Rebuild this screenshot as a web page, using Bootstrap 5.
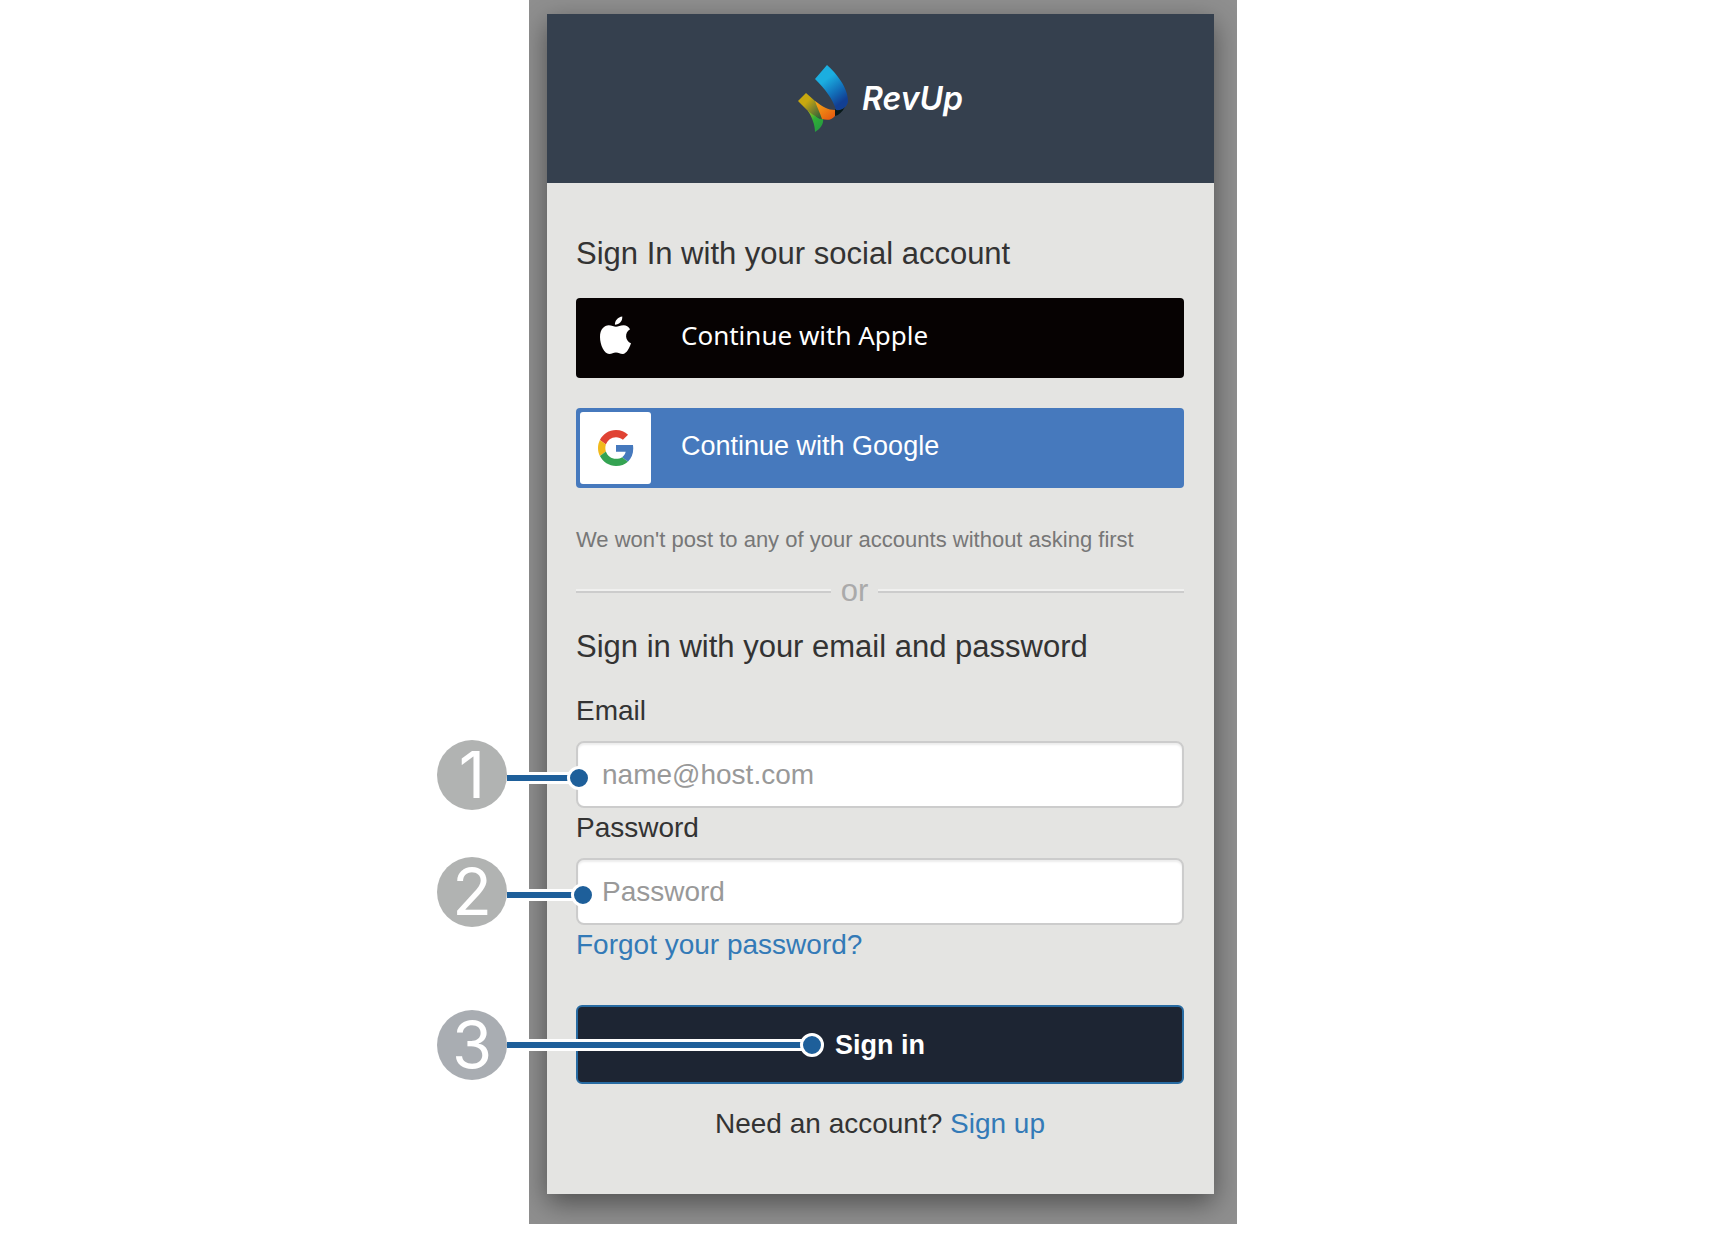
<!DOCTYPE html>
<html lang="en">
<head>
<meta charset="utf-8">
<meta name="viewport" content="width=device-width, initial-scale=1">
<title>RevUp sign in</title>
<link href="https://cdn.jsdelivr.net/npm/bootstrap@5.3.0/dist/css/bootstrap.min.css" rel="stylesheet">
<style>
body { font-family: "Liberation Sans", Arial, sans-serif; font-size: 28px; line-height: 40px; color: #333; background: #fff; }
.stage-row { padding-left: 45px; }
.stage { width: 100%; max-width: 708px; background: #8f8f8f; padding: 14px 23px 30px 18px; }
.dialog { position: relative; z-index: 0; background: #e4e4e2; }
/* soft dialog shadow, kept inside the backdrop */
.dialog::before { content: ""; position: absolute; inset: 0; z-index: -1; background: #e4e4e2; box-shadow: 0 9px 26px rgba(0,0,0,.45); clip-path: inset(-14px -23px -30px -18px); }
.brand-bar { background: #35404e; height: 169px; gap: 14px; }
.brand-name { font-family: Inter, sans-serif; font-weight: 600; font-style: italic; font-size: 32px; color: #fff; }
.dialog-main { padding: 51px 30px 50px 29px; }
.section-title { font-size: 31px; line-height: 40px; font-weight: 400; margin: 0; }
.social-btn { height: 80px; border: 0; border-radius: 4px; padding: 4px; color: #fff; font-size: 27px; gap: 30px; }
.social-btn .glyph { width: 71px; height: 72px; border-radius: 3px; }
.social-apple { background: #060202; font-family: "Noto Sans", sans-serif; font-size: 26px; margin-top: 24px; padding-bottom: 10px; }
.social-google { background: #4679bd; margin-top: 30px; }
.social-google .glyph { background: #fff; }
.social-google .caption-text { padding-bottom: 4px; }
.promise { font-size: 22px; line-height: 32px; color: #777; margin: 36px 0 0; white-space: nowrap; }
.divider { color: #aaa; font-size: 31px; line-height: 40px; gap: 10px; margin-top: 15px; }
.divider span { height: 4px; background: #ccc; border-top: 2px solid #f0f0ef; }
.divider .left-rule { flex: 255; }
.divider .right-rule { flex: 306; }
.field-box { height: 67px; font-size: 28px; border: 2px solid #ccc; border-radius: 8px; padding: 0 24px; box-shadow: inset 0 2px 2px rgba(0,0,0,.075); background: #fff; color: #333; }
.field-box::placeholder { color: #999; opacity: 1; }
.field-name { line-height: 40px; margin-bottom: 10px; }
.text-link { color: #337ab7; text-decoration: none; }
.signin-row { margin-top: 40px; }
.signin-btn { height: 79px; background: #1d2533; border: 2px solid #286ba2; border-radius: 6px; color: #fff; font-weight: 700; font-size: 27px; }
.signup-line { margin: 20px 0 0; }
/* numbered callouts laid over the form */
.callout { position: absolute; top: 50%; right: 100%; transform: translateY(-50%); pointer-events: none; z-index: 2; }
.callout .num { width: 70px; height: 70px; border-radius: 50%; background: #b1b3b2; color: #fff; font-family: Inter, sans-serif; font-weight: 400; font-size: 65px; line-height: 70px; text-align: center; flex: none; }
.callout .stem { height: 12px; background: #1e5f9a; border: solid #fff; border-width: 3px 0; flex: 1; margin-right: -4px; }
.callout .tip { width: 24px; height: 24px; border: 3px solid #fff; border-radius: 50%; background: #1e5f9a; flex: none; }
.low-stem { padding-top: 6px; }
.low-stem .num { margin-bottom: 6px; }
.to-email { width: 154px; margin-right: -15px; }
.to-password { width: 158px; margin-right: -19px; }
.to-signin { width: 387px; margin-right: -248px; }
.to-signin .num { background: #a9adb2; }
</style>
</head>
<body>
<div class="stage-row d-flex justify-content-center">
  <div class="stage">
    <main class="dialog">
      <header class="brand-bar d-flex align-items-center justify-content-center">
        <svg width="50" height="68" viewBox="0 0 50 68" aria-hidden="true">
          <defs>
            <linearGradient id="b" x1="0.2" y1="0.1" x2="0.7" y2="1"><stop offset=".25" stop-color="#1baee0"/><stop offset=".6" stop-color="#1272bb"/><stop offset=".9" stop-color="#123f93"/></linearGradient>
            <linearGradient id="o" x1="0" y1="0" x2="1" y2="1"><stop offset="0" stop-color="#f8b417"/><stop offset="1" stop-color="#e4530f"/></linearGradient>
            <linearGradient id="y" x1="0" y1="0" x2="1" y2="1"><stop offset=".35" stop-color="#c8a80f"/><stop offset=".65" stop-color="#77802c"/><stop offset="1" stop-color="#1f5c38"/></linearGradient>
            <linearGradient id="g" x1="0" y1="0" x2=".6" y2="1"><stop offset="0" stop-color="#b5c919"/><stop offset=".5" stop-color="#2fae36"/><stop offset="1" stop-color="#269b40"/></linearGradient>
          </defs>
          <path d="M37 44 C41 46 45 44 47 42 C44 47 41 50 37 51Z" fill="#081818"/>
          <path d="M29 0 L17 14 C27 24 35 34 38 45 C44 46 50 41 50 36 C50 23 39 9 29 0Z" fill="url(#b)"/>
          <path d="M17 36 C25 42 30 45 37 45 L37 51 C33 56 28 55 24 54 C18 51 11 44 13 39Z" fill="url(#o)"/>
          <path d="M10 44 C17 50 20 55 25 54 C26 59 22 64 17 67 C17 60 14 52 10 46Z" fill="url(#g)"/>
          <path d="M8 28 L0 36 L11 47 C15 50 21 53 24 54 C22 48 19 42 17 36Z" fill="url(#y)"/>
        </svg>
        <span class="brand-name">RevUp</span>
      </header>
      <div class="dialog-main">
        <h1 class="section-title">Sign In with your social account</h1>
        <button type="button" class="social-btn social-apple w-100 d-flex align-items-center">
          <span class="glyph d-flex align-items-center justify-content-center">
            <svg width="31" height="39" viewBox="0 0 32 39" fill="#fff" aria-hidden="true"><path d="M23 0c.4 4.500-3 8.500-7.600 8.500C15 4.500 18.500.6 23 0Z"/><path d="M31 13c-6 3.500-5 12 1 14.500-1.500 4.500-4.500 11-8.500 11-3 0-4-1.500-7-1.500s-4 1.500-7 1.500C4.500 38.500 0 29.500 0 21 0 13 4.500 9 9 9c3 0 5.500 1.500 7.500 1.500s4.500-1.500 8-1.500c2.500 0 5 1.500 6.500 4Z"/></svg>
          </span>
          <span class="caption-text">Continue with Apple</span>
        </button>
        <button type="button" class="social-btn social-google w-100 d-flex align-items-center">
          <span class="glyph d-flex align-items-center justify-content-center">
            <svg width="36" height="36" viewBox="0 0 48 48" aria-hidden="true"><path fill="#e04334" d="M24 9.500c3.540 0 6.710 1.220 9.210 3.600l6.850-6.850C35.900 2.380 30.470 0 24 0 14.620 0 6.510 5.380 2.560 13.220l7.980 6.190C12.430 13.720 17.740 9.500 24 9.500z"/><path fill="#4679bd" d="M46.980 24.550c0-1.570-.15-3.090-.38-4.550H24v9.020h12.940c-.58 2.960-2.260 5.480-4.780 7.180l7.730 6c4.510-4.180 7.090-10.360 7.090-17.650z"/><path fill="#f1b91b" d="M10.530 28.590c-.48-1.450-.76-2.990-.76-4.590s.27-3.140.76-4.590l-7.980-6.190C.92 16.460 0 20.120 0 24c0 3.880.92 7.540 2.560 10.780l7.970-6.190z"/><path fill="#34a352" d="M24 48c6.480 0 11.930-2.130 15.890-5.810l-7.730-6c-2.150 1.450-4.920 2.300-8.160 2.300-6.260 0-11.570-4.220-13.470-9.910l-7.980 6.190C6.510 42.620 14.620 48 24 48z"/></svg>
          </span>
          <span class="caption-text">Continue with Google</span>
        </button>
        <p class="promise">We won't post to any of your accounts without asking first</p>
        <div class="divider d-flex align-items-center"><span class="left-rule"></span>or<span class="right-rule"></span></div>
        <form>
          <h2 class="section-title mt-3">Sign in with your email and password</h2>
          <label class="field-name d-block mt-4" for="email">Email</label>
          <div class="position-relative">
            <input id="email" type="email" class="field-box form-control" placeholder="name@host.com">
            <div class="callout low-stem to-email d-flex align-items-center"><span class="num">1</span><span class="stem"></span><span class="tip"></span></div>
          </div>
          <label class="field-name d-block" for="password">Password</label>
          <div class="position-relative">
            <input id="password" type="password" class="field-box form-control" placeholder="Password">
            <div class="callout low-stem to-password d-flex align-items-center"><span class="num">2</span><span class="stem"></span><span class="tip"></span></div>
          </div>
          <a class="text-link d-block" href="#">Forgot your password?</a>
          <div class="signin-row position-relative">
            <button type="submit" class="signin-btn w-100 d-block">Sign in</button>
            <div class="callout to-signin d-flex align-items-center"><span class="num">3</span><span class="stem"></span><span class="tip"></span></div>
          </div>
          <p class="signup-line text-center">Need an account? <a class="text-link" href="#">Sign up</a></p>
        </form>
      </div>
    </main>
  </div>
</div>
<script src="https://cdn.jsdelivr.net/npm/bootstrap@5.3.0/dist/js/bootstrap.bundle.min.js"></script>
</body>
</html>
